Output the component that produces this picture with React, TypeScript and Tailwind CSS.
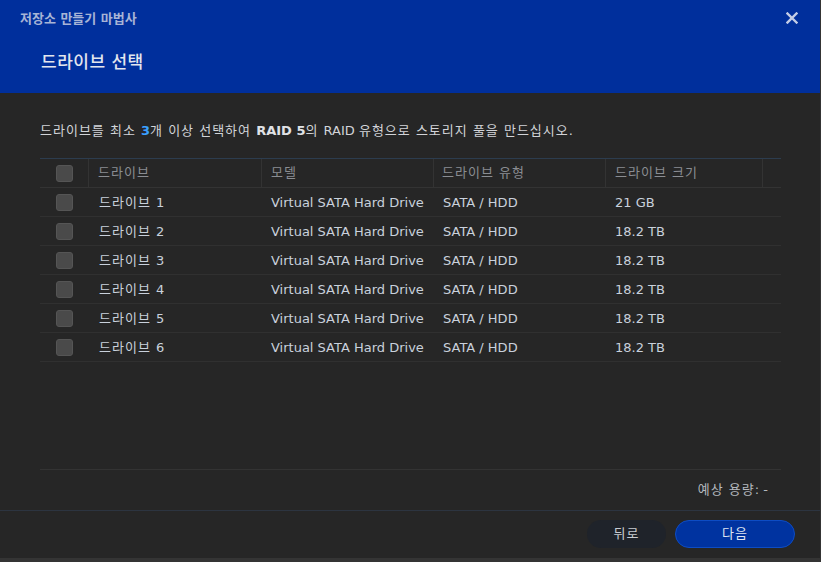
import React from "react";

const rows = [
  { n: "1", size: "21 GB" },
  { n: "2", size: "18.2 TB" },
  { n: "3", size: "18.2 TB" },
  { n: "4", size: "18.2 TB" },
  { n: "5", size: "18.2 TB" },
  { n: "6", size: "18.2 TB" },
];

function K({ children }: { children: React.ReactNode }) {
  return <span className="tracking-[1px]">{children}</span>;
}

function Box() {
  return <div className="w-[17px] h-[17px] rounded-[3px] bg-[#4a4a4a] border border-[#555]" />;
}

export default function App() {
  return (
    <div
      className="w-[821px] h-[562px] bg-[#343434] overflow-hidden"
      style={{ fontFamily: '"DejaVu Sans", "Noto Sans CJK KR", sans-serif' }}
    >
      <div className="w-[820px] h-[558px] bg-[#262626] flex flex-col">
        {/* header */}
        <div className="h-[93px] bg-[#002f9c] flex flex-col shrink-0">
          <div className="h-[36px] flex items-center justify-between pl-[20px] pr-[22px]">
            <span className="text-[13px] font-bold text-[#a7b4d6] leading-none">저장소 만들기 마법사</span>
            <svg width="12" height="12" viewBox="0 0 12 12">
              <path d="M1.5 1.5 L10.5 10.5 M10.5 1.5 L1.5 10.5" stroke="#c3cde6" strokeWidth="2.4" strokeLinecap="square" />
            </svg>
          </div>
          <div className="pl-[41px] pt-[15px]">
            <span className="text-[17px] font-medium text-[#e3e6ee] leading-none tracking-[0.5px]">드라이브 선택</span>
          </div>
        </div>

        {/* body */}
        <div className="flex-1 flex flex-col px-[40px] pr-[39px]">
          <div className="pt-[29px] h-[65px] text-[13px] text-[#d2d4d8] leading-[18px]">
            <K>드라이브를 최소 </K>
            <b className="text-[#3aa0ff]">3</b>
            <K>개 이상 선택하여 </K>
            <b className="text-[#e0e2e6]">RAID 5</b>
            <K>의 </K>RAID <K>유형으로 스토리지 풀을 만드십시오.</K>
          </div>
          <div className="border-t border-[#2c3c4e]">
            <div className="flex h-[29px] border-b border-[#333] text-[13px] text-[#8a8d92]">
              <div className="w-[49px] flex items-center justify-center border-r border-[#333]"><Box /></div>
              <div className="w-[173px] flex items-center pl-[9px] border-r border-[#333]"><K>드라이브</K></div>
              <div className="w-[172px] flex items-center pl-[9px] border-r border-[#333]"><K>모델</K></div>
              <div className="w-[172px] flex items-center pl-[8px] border-r border-[#333]"><K>드라이브 유형</K></div>
              <div className="w-[157px] flex items-center pl-[9px] border-r border-[#333]"><K>드라이브 크기</K></div>
              <div className="flex-1" />
            </div>
            {rows.map((r) => (
              <div key={r.n} className="flex h-[29px] border-b border-[#303030] text-[13px] text-[#c9d1dc]">
                <div className="w-[49px] flex items-center justify-center"><Box /></div>
                <div className="w-[173px] flex items-center pl-[10px] pt-[1px] whitespace-pre"><K>드라이브 </K>{r.n}</div>
                <div className="w-[172px] flex items-center pl-[9px] pt-[1px]">Virtual SATA Hard Drive</div>
                <div className="w-[172px] flex items-center pl-[9px] pt-[1px]">SATA / HDD</div>
                <div className="w-[157px] flex items-center pl-[9px] pt-[1px]">{r.size}</div>
                <div className="flex-1" />
              </div>
            ))}
          </div>
          <div className="flex-1" />
          <div className="border-t border-[#333] h-[41px] flex items-center justify-end pr-[13px] text-[13px] text-[#b4b8be] whitespace-pre">
            <K>예상 용량</K>: -
          </div>
        </div>

        {/* footer */}
        <div className="h-[48px] border-t border-[#2c3440] flex items-start justify-end pt-[9px] pr-[25px] gap-[9px] shrink-0">
          <button className="w-[79px] h-[28px] rounded-full bg-[#1f232a] text-[13px] text-[#c8ccd2] tracking-[1px]">뒤로</button>
          <button className="w-[120px] h-[28px] rounded-full bg-[#0033a0] border border-[#0d4cc4] text-[13px] text-[#dfe5f2] tracking-[1px]">다음</button>
        </div>
      </div>
    </div>
  );
}
